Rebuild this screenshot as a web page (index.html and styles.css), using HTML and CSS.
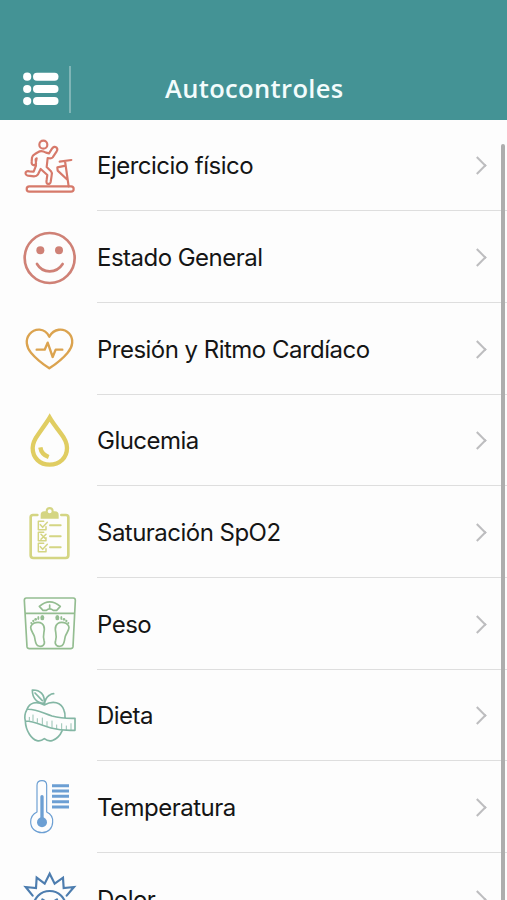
FILE: index.html
```html
<!DOCTYPE html>
<html lang="es">
<head>
<meta charset="utf-8">
<title>Autocontroles</title>
<link rel="stylesheet" href="styles.css">
</head>
<body>
<div class="screen">
  <header class="header">
    <svg class="menu" viewBox="0 0 36 34"><g fill="currentColor"><circle cx="4.2" cy="4.7" r="4.1"/><rect x="10" y="0.7" width="25.5" height="8" rx="4"/><circle cx="4.2" cy="17" r="4.1"/><rect x="10" y="13" width="25.5" height="8" rx="4"/><circle cx="4.2" cy="29.1" r="4.1"/><rect x="10" y="25.1" width="25.5" height="8" rx="4"/></g></svg>
    <span class="divider"></span>
    <h1 class="title">Autocontroles</h1>
  </header>
  <main class="list">
    <div class="row">
      <svg class="icon exercise" viewBox="0 0 240 240">
        <circle cx="100" cy="56" r="12"/>
        <path d="M85 78Q94 72 108 80L117 82L126 68Q132 59 140 65Q144 69 140 76L128 94Q124 99 113 96L110 123L123 136Q127 140 125 148L122 168Q120 176 112 173Q108 171 110 161L112 147L92 129L84 145Q80 151 72 151L54 149Q45 147 47 139Q50 134 58 136L71 137L78 119Q76 112 80 97L77 100L78 112Q76 119 69 117Q64 115 65 107L66 95Q67 88 75 84Z"/>
        <rect x="50" y="181" width="141" height="16" rx="8"/>
        <path d="M149 107L184 102M165 105L176 181M167 119L142 124L143 134L173 162"/>
      </svg>
      <span class="label">Ejercicio físico</span>
    </div>
    <div class="row">
      <svg class="icon mood" viewBox="0 0 240 240">
        <circle cx="119" cy="120" r="75"/><circle class="solid" cx="91" cy="97" r="12"/><circle class="solid" cx="147" cy="97" r="12"/><path d="M81 138Q94 160 119 160Q144 160 158 138"/>
      </svg>
      <span class="label">Estado General</span>
    </div>
    <div class="row">
      <svg class="icon heart" viewBox="0 0 240 240">
        <path d="M118 83C104 55 74 57 59 75C45 92 49 115 63 131Q82 154 118 178Q154 154 173 131C189 113 192 90 177 73C160 56 132 58 118 83Z"/><path d="M80 122H104L113 101L128 144L137 122H157"/>
      </svg>
      <span class="label">Presión y Ritmo Cardíaco</span>
    </div>
    <div class="row">
      <svg class="icon drop" viewBox="0 0 240 240">
        <path d="M119 50Q112 62 86 98Q68 122 68 141C68 171 90 191 119 191C149 191 171 170 171 141Q171 121 153 98Q127 64 119 50Z"/><path d="M91 139Q94 160 116 168"/>
      </svg>
      <span class="label">Glucemia</span>
    </div>
    <div class="row">
      <svg class="icon clipboard" viewBox="0 0 240 240">
        <path class="frame" d="M82 66H69Q62 66 62 73V187Q62 195 70 195H167Q175 195 175 187V73Q175 66 168 66H154"/>
        <path class="solid" fill-rule="evenodd" d="M92 77V66Q92 55 103 55H107Q107 42 119 42Q131 42 131 55H135Q146 55 146 66V77ZM119 49A6 6 0 1 0 119 61A6 6 0 1 0 119 49Z"/>
        <path d="M101 85H85V110H108V101M91 95L98 103L112 88M101 118H85V143H108V134M93 124L108 139M108 124L93 139M101 151H85V176H108V167M91 161L98 169L112 154"/><path class="lines" d="M120 97H152M120 130H152M120 163H152"/>
      </svg>
      <span class="label">Saturación SpO2</span>
    </div>
    <div class="row">
      <svg class="icon scale" viewBox="0 0 240 240">
        <path d="M49 42H190Q196 42 196 49L189 188Q188 194 182 194H58Q52 194 51 188L43 49Q43 42 49 42ZM46 88H193"/>
        <path d="M88 67Q119 40 151 67L140 79H130Q119 70 109 79H99ZM119 63V74"/>
        <path d="M77 116C92 112 104 121 103 136C102 148 98 155 102 169C107 183 96 189 86 186C75 183 77 171 73 157C70 147 62 141 62 130Q64 119 77 116Z"/>
        <path d="M162 116C147 112 135 121 136 136C137 148 141 155 137 169C132 183 143 189 153 186C164 183 162 171 166 157C169 147 177 141 177 130Q175 119 162 116Z"/>
        <g class="solid"><ellipse cx="97" cy="101" rx="6" ry="8"/><ellipse cx="85" cy="102" rx="3" ry="6"/><circle cx="77" cy="106" r="4"/><circle cx="70" cy="111" r="3.5"/><circle cx="64" cy="117" r="3"/><ellipse cx="142" cy="101" rx="6" ry="8"/><ellipse cx="154" cy="102" rx="3" ry="6"/><circle cx="162" cy="106" r="4"/><circle cx="169" cy="111" r="3.5"/><circle cx="175" cy="117" r="3"/></g>
      </svg>
      <span class="label">Peso</span>
    </div>
    <div class="row">
      <svg class="icon apple" viewBox="0 0 240 240">
        <path d="M51 100C59 80 78 74 103 87C128 73 154 78 162 103Q166 112 165 124M46 135C47 166 66 190 81 194Q92 197 103 188Q114 197 126 194C141 189 151 177 157 163M46 135Q41 118 51 100C77 98 100 112 126 120Q155 128 195 127V163Q155 165 123 156C94 148 74 136 46 135M103 87Q105 66 118 58Q124 53 131 53M103 82C81 81 67 67 67 42C90 41 105 55 103 82M75 51L97 74"/>
        <path class="ticks" d="M58 133V124M69 134V117M82 139V128M97 145V126M111 149V137M126 154V135M140 158V147M155 160V143M169 161V150M183 161V143"/>
      </svg>
      <span class="label">Dieta</span>
    </div>
    <div class="row">
      <svg class="icon thermo" viewBox="0 0 240 240">
        <path class="tube" d="M81 132V52Q81 38 96 38Q110 38 110 52V132C123 138 129 149 128 162C128 181 114 194 96 194C77 194 62 181 62 162Q62 141 81 132Z"/>
        <circle class="solid" cx="96" cy="163" r="15"/><path class="mercury" d="M96 160V86"/><path class="bars" d="M126 53H177M126 69H177M126 85H177M126 101H177M126 117H177"/>
      </svg>
      <span class="label">Temperatura</span>
    </div>
    <div class="row">
      <svg class="icon pain" viewBox="0 0 240 240">
        <path d="M68 110L47 84L78 87L80 56L104 74L119 44L134 74L159 56L161 87L192 84L170 110"/><circle cx="119" cy="145" r="49"/><path d="M97 121L108 128M141 121L130 128"/>
      </svg>
      <span class="label">Dolor</span>
    </div>
  </main>
  <div class="scrollbar"></div>
</div>
</body>
</html>
```
FILE: styles.css
```css
* { box-sizing: border-box; }
html, body { margin: 0; height: 100%; overflow: hidden; }
body { background: #fdfdfd; font-family: Inter, "Liberation Sans", sans-serif; color: #151515; }
.screen { position: relative; height: 900px; overflow: hidden; }
.header {
  display: flex;
  align-items: center;
  height: 119.5px;
  padding: 59px 0 0 23px;
  background: #449395;
  color: #fff;
}
.menu { width: 36px; height: 34px; flex: none; }
.divider { width: 2px; height: 47px; margin-left: 10px; background: #7fb5b6; flex: none; }
.title {
  flex: 1;
  margin: 0 69px 2px 94px;
  font: 600 25.5px/36px "Open Sans", sans-serif;
  letter-spacing: 0.35px;
  color: #f3fcfc;
  white-space: nowrap;
}
.row {
  display: flex;
  align-items: center;
  height: 91.7px;
  padding-left: 10px;
}
.icon {
  width: 80px;
  height: 80px;
  margin-top: 1px;
  flex: none;
  fill: none;
  stroke: currentColor;
  stroke-width: 6.5;
  stroke-linecap: round;
  stroke-linejoin: round;
}
.icon .solid { fill: currentColor; stroke: none; }
.label {
  flex: 1;
  display: flex;
  align-items: center;
  height: 100%;
  margin-left: 7px;
  padding-top: 2px;
  border-bottom: 1px solid #dedede;
  font-size: 24px;
  letter-spacing: -0.52px;
}
.label::after {
  content: "";
  width: 11px;
  height: 11px;
  margin: 0 23px 0 auto;
  border: solid #bdbdbf;
  border-width: 2.5px 2.5px 0 0;
  transform: rotate(45deg);
}
.exercise { color: #d6796a; }
.mood { color: #cf8176; stroke-width: 8; }
.heart { color: #dba34f; stroke-width: 7; }
.drop { color: #e0cd62; stroke-width: 13; stroke-linecap: butt; stroke-linejoin: miter; }
.clipboard { color: #d4d583; stroke-width: 4.5; }
.clipboard .frame { stroke-width: 8; }
.clipboard .lines { stroke-width: 6; }
.scale { color: #94bd91; stroke-width: 5; }
.apple { color: #83b6a4; stroke-width: 5; }
.apple .ticks { stroke-width: 2.5; }
.thermo { color: #6c9fd3; }
.thermo .tube { stroke-width: 3.5; }
.thermo .mercury { stroke-width: 10; }
.thermo .bars { stroke-width: 9; stroke-linecap: butt; }
.pain { color: #4d7daf; stroke-width: 6.5; stroke-linejoin: miter; }
.scrollbar {
  position: absolute;
  top: 144px;
  right: 2px;
  bottom: -10px;
  width: 4px;
  border-radius: 2px;
  background: #adadad;
}
```
